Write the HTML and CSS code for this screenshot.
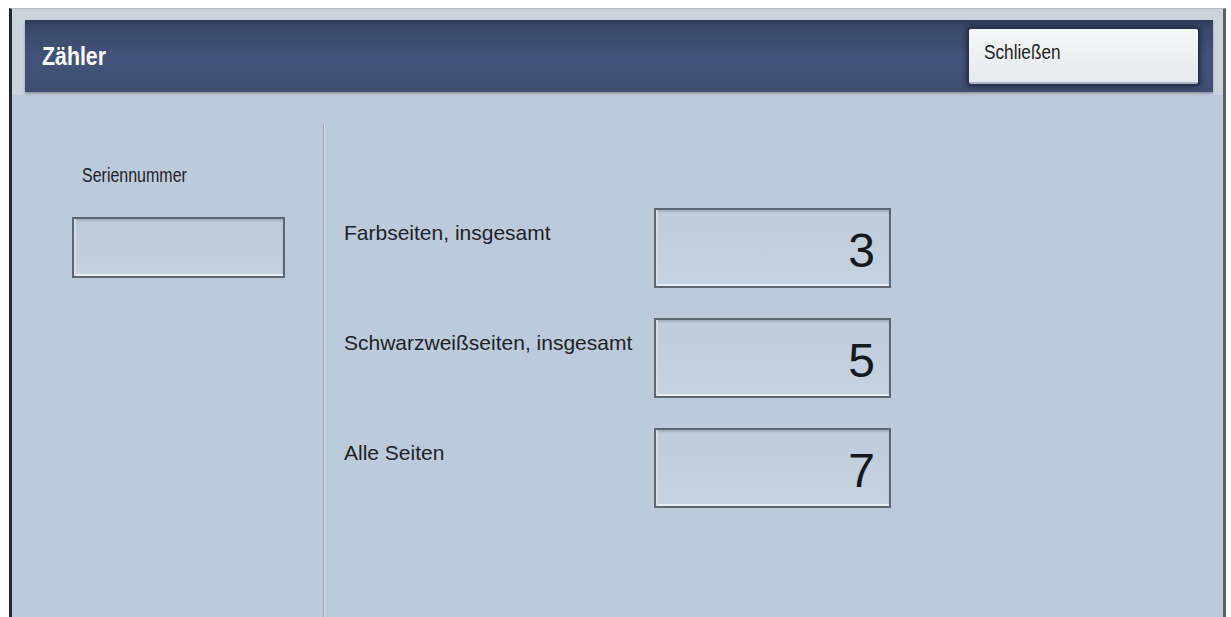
FILE: index.html
```html
<!DOCTYPE html>
<html lang="de">
<head>
<meta charset="utf-8">
<title>Zähler</title>
<link rel="stylesheet" href="styles.css">
</head>
<body>
<div class="frame">
  <div class="titlebar-wrap">
    <div class="titlebar">
      <h1 class="title"><span class="narrow">Zähler</span></h1>
      <button class="close-btn" type="button"><span class="narrow">Schließen</span></button>
    </div>
  </div>
  <div class="content">
    <section class="serial-col">
      <div class="serial-label"><span class="narrow">Seriennummer</span></div>
      <div class="serial-box"></div>
    </section>
    <section class="counter-col">
      <div class="counter-grid">
        <div class="counter-label">Farbseiten, insgesamt</div>
        <div class="counter-box">3</div>
        <div class="counter-label">Schwarzweißseiten, insgesamt</div>
        <div class="counter-box">5</div>
        <div class="counter-label">Alle Seiten</div>
        <div class="counter-box">7</div>
      </div>
    </section>
  </div>
</div>
</body>
</html>
```

FILE: styles.css
```css
html, body {
  margin: 0;
  padding: 0;
  background: #ffffff;
  overflow: hidden;
  height: 617px;
}

body {
  font-family: "Liberation Sans", Arial, sans-serif;
}

.narrow {
  display: inline-block;
  white-space: nowrap;
  transform: scaleX(0.82);
  transform-origin: left center;
}

.frame {
  margin: 8px 0 0 9px;
  width: 1211px;
  height: 620px;
  border-left: 3px solid #1f2832;
  border-right: 3px solid #56616c;
  border-top: 1px solid #b4bcc4;
  background: #bccbdb;
  display: flex;
  flex-direction: column;
}

.titlebar-wrap {
  background: #cbd3db;
  padding: 11px 10px 3px 13px;
}

.titlebar {
  height: 72px;
  background: linear-gradient(#2f3c58 0%, #3a4a6a 12%, #42537a 55%, #3d4e70 100%);
  box-shadow: 0 2px 2px rgba(30, 40, 60, 0.35);
  display: flex;
  align-items: center;
  justify-content: space-between;
  padding: 0 15px 0 17px;
}

.title {
  margin: 0;
  font-weight: bold;
  font-size: 26px;
  line-height: 26px;
  color: #ffffff;
}

.close-btn {
  width: 229px;
  height: 55px;
  margin: 0;
  padding: 12px 0 0 15px;
  border: none;
  border-bottom: 2px solid #aab6c6;
  border-radius: 2px;
  background: linear-gradient(#f6f7f9, #e6e9ee);
  box-shadow: 0 0 0 2px #28334d, 0 0 4px 3px rgba(18, 26, 46, 0.55);
  text-align: left;
  display: flex;
  align-items: flex-start;
  font-family: "Liberation Sans", Arial, sans-serif;
  font-size: 21px;
  line-height: 21px;
  color: #1e1e1e;
  box-sizing: border-box;
}

.content {
  flex: 1;
  display: grid;
  grid-template-columns: 311px 1fr;
}

.serial-col {
  padding: 70px 0 0 60px;
}

.serial-label {
  margin-left: 10px;
  font-size: 19.5px;
  line-height: 20px;
  color: #1f2228;
}

.serial-box {
  margin-top: 32px;
  width: 213px;
  height: 61px;
  box-sizing: border-box;
  border: 2px solid #5b6673;
  background: linear-gradient(#bccbda, #c4d1de);
  box-shadow: inset 2px 0 0 #d6dfe9, inset 0 -2px 0 #e9eef4, inset 0 2px 2px rgba(40, 50, 70, 0.18);
}

.counter-col {
  margin-top: 30px;
  border-left: 1px solid #98a6b6;
  box-shadow: inset 1px 0 0 #d3dde8;
  padding: 83px 0 0 20px;
}

.counter-grid {
  display: grid;
  grid-template-columns: 310px 237px;
  row-gap: 30px;
}

.counter-label {
  margin-top: 14px;
  font-size: 21px;
  line-height: 21px;
  color: #1f2228;
}

.counter-box {
  height: 80px;
  box-sizing: border-box;
  border: 2px solid #5b6673;
  background: linear-gradient(#bfccda, #c5d2df);
  box-shadow: inset 2px 0 0 #d6dfe9, inset 0 -2px 0 #e9eef4, inset 0 2px 2px rgba(40, 50, 70, 0.18);
  display: flex;
  justify-content: flex-end;
  align-items: center;
  padding: 5px 14px 0 0;
  font-size: 48px;
  line-height: 48px;
  color: #15181c;
}
```
